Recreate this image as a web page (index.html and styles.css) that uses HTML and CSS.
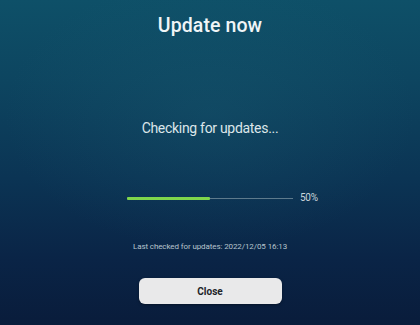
FILE: index.html
```html
<!DOCTYPE html>
<html lang="en">
<head>
<meta charset="utf-8">
<title>Update now</title>
<link rel="stylesheet" href="styles.css">
</head>
<body>
<main class="screen">
  <h1 class="title">Update now</h1>
  <p class="status">Checking for updates...</p>
  <div class="progress-row">
    <div class="track"><div class="fill" style="width:50%"></div></div>
    <span class="percent">50%</span>
  </div>
  <p class="last-checked">Last checked for updates: 2022/12/05 16:13</p>
  <button class="close-btn" type="button">Close</button>
</main>
</body>
</html>
```
FILE: styles.css
```css
html, body {
  margin: 0;
  padding: 0;
  height: 100%;
}
body {
  width: 420px;
  height: 325px;
  overflow: hidden;
  font-family: Roboto, "Noto Sans", sans-serif;
  color: #e6edf0;
  background:
    radial-gradient(ellipse 70% 60% at 50% 35%, rgba(30, 100, 120, 0.25), rgba(0,0,0,0) 70%),
    linear-gradient(180deg, #0e5068 0%, #0d4560 25%, #0b3454 55%, #0a2446 80%, #091c3b 100%);
}
.screen {
  display: flex;
  flex-direction: column;
  align-items: center;
  height: 325px;
  box-sizing: border-box;
  padding-top: 14px;
}
.title {
  margin: 0;
  font-size: 19.5px;
  line-height: 24px;
  font-weight: 500;
  color: #f0f5f7;
  letter-spacing: 0.1px;
}
.status {
  margin: 81px 0 0;
  font-size: 14px;
  line-height: 18px;
  font-weight: 400;
  color: #dce6ea;
  letter-spacing: -0.3px;
}
.progress-row {
  margin-top: 55px;
  width: 100%;
  display: grid;
  grid-template-columns: 1fr 166px 1fr;
  align-items: center;
}
.track {
  grid-column: 2;
  height: 1px;
  background: #5d7a8c;
}
.fill {
  height: 3px;
  margin-top: -1px;
  background: #7fd64c;
  border-radius: 1px;
}
.percent {
  grid-column: 3;
  padding-left: 7px;
  font-size: 10px;
  line-height: 12px;
  color: #c9d4da;
  letter-spacing: -0.3px;
}
.last-checked {
  margin: 38px 0 0;
  font-size: 8px;
  line-height: 10px;
  color: #b7c4cc;
  letter-spacing: -0.1px;
}
.close-btn {
  margin-top: 26px;
  width: 143px;
  height: 26px;
  border: none;
  border-radius: 6px;
  background: #e9e9ea;
  color: #1e2329;
  font-family: Roboto, "Noto Sans", sans-serif;
  font-size: 10px;
  font-weight: 700;
  box-shadow: 0 1px 3px rgba(0,0,0,0.35);
  padding: 0;
}
```
